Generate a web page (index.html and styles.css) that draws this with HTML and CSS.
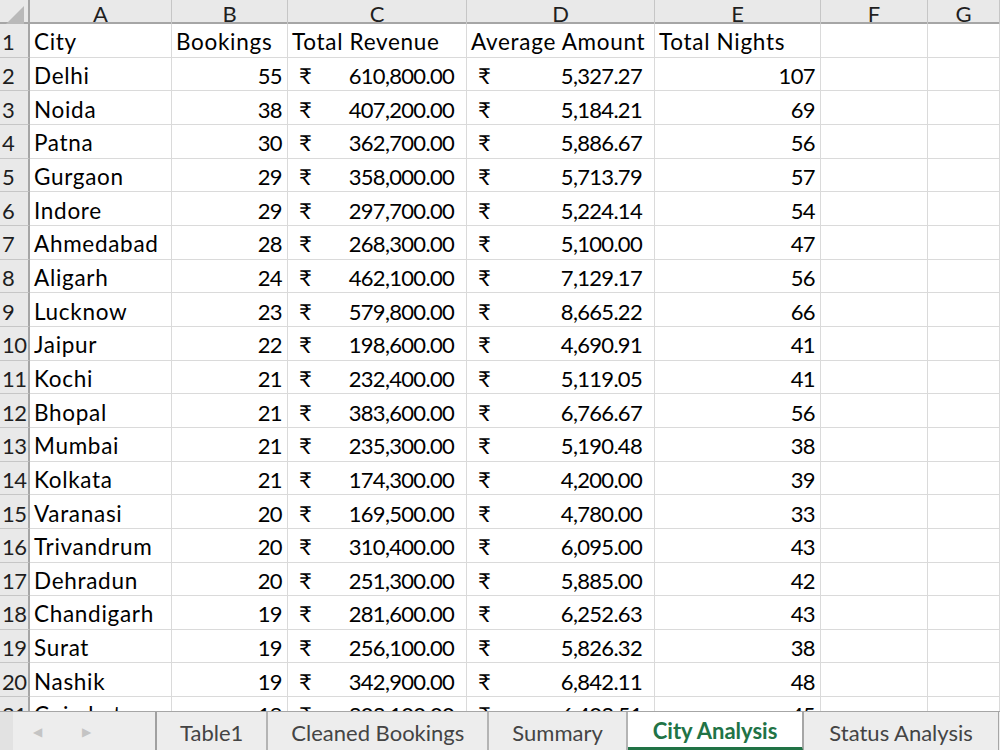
FILE: index.html
```html
<!DOCTYPE html>
<html lang="en">
<head>
  <meta charset="UTF-8" />
  <meta name="viewport" content="width=device-width, initial-scale=1.0"/>
  <title>City Analysis</title>
  <link rel="stylesheet" href="styles.css">
</head>
<body>

  <div class="sheet">
    <div class="grid" id="grid">
      <div class="row head-row">
        <div class="corner"><span class="corner-tri"></span></div>
        <div class="col-head">A</div>
        <div class="col-head">B</div>
        <div class="col-head">C</div>
        <div class="col-head">D</div>
        <div class="col-head">E</div>
        <div class="col-head">F</div>
        <div class="col-head">G</div>
      </div>
      <div class="row">
        <div class="row-head">1</div>
        <div class="cell">City</div>
        <div class="cell">Bookings</div>
        <div class="cell">Total Revenue</div>
        <div class="cell">Average Amount</div>
        <div class="cell">Total Nights</div>
        <div class="cell"></div>
        <div class="cell"></div>
      </div>
      <!-- Data rows inserted by JS -->
    </div>

    <div class="tabs">
      <div class="tab-nav">
        <span class="arrow">&#9664;</span>
        <span class="arrow">&#9654;</span>
      </div>
      <div class="tab">Table1</div>
      <div class="tab">Cleaned Bookings</div>
      <div class="tab">Summary</div>
      <div class="tab active">City Analysis</div>
      <div class="tab raised">Status Analysis</div>
    </div>
  </div>

  <script>
    const cities = [
      ["Delhi", 55, "610,800.00", "5,327.27", 107],
      ["Noida", 38, "407,200.00", "5,184.21", 69],
      ["Patna", 30, "362,700.00", "5,886.67", 56],
      ["Gurgaon", 29, "358,000.00", "5,713.79", 57],
      ["Indore", 29, "297,700.00", "5,224.14", 54],
      ["Ahmedabad", 28, "268,300.00", "5,100.00", 47],
      ["Aligarh", 24, "462,100.00", "7,129.17", 56],
      ["Lucknow", 23, "579,800.00", "8,665.22", 66],
      ["Jaipur", 22, "198,600.00", "4,690.91", 41],
      ["Kochi", 21, "232,400.00", "5,119.05", 41],
      ["Bhopal", 21, "383,600.00", "6,766.67", 56],
      ["Mumbai", 21, "235,300.00", "5,190.48", 38],
      ["Kolkata", 21, "174,300.00", "4,200.00", 39],
      ["Varanasi", 20, "169,500.00", "4,780.00", 33],
      ["Trivandrum", 20, "310,400.00", "6,095.00", 43],
      ["Dehradun", 20, "251,300.00", "5,885.00", 42],
      ["Chandigarh", 19, "281,600.00", "6,252.63", 43],
      ["Surat", 19, "256,100.00", "5,826.32", 38],
      ["Nashik", 19, "342,900.00", "6,842.11", 48],
      ["Coimbatore", 19, "303,100.00", "6,403.51", 45]
    ];

    function createRow(city, i) {
      return `
        <div class="row">
          <div class="row-head">${i + 2}</div>
          <div class="cell">${city[0]}</div>
          <div class="cell num">${city[1]}</div>
          <div class="cell money"><span>&#8377;</span><span>${city[2]}</span></div>
          <div class="cell money"><span>&#8377;</span><span>${city[3]}</span></div>
          <div class="cell num">${city[4]}</div>
          <div class="cell"></div>
          <div class="cell"></div>
        </div>
      `;
    }

    document.getElementById("grid").insertAdjacentHTML("beforeend", cities.map(createRow).join(""));
  </script>
</body>
</html>
```

FILE: styles.css
```css
* {
  margin: 0;
  padding: 0;
  box-sizing: border-box;
}

body {
  background-color: white;
  color: black;
  font-family: 'Lato', 'Noto Sans', sans-serif;
  overflow: hidden;
}

.sheet {
  width: 1000px;
  height: 750px;
  display: flex;
  flex-direction: column;
}

.grid {
  flex: 1;
  overflow: hidden;
}

.row {
  display: grid;
  grid-template-columns: 30px 142px 116px 179px 188px 166px 107px 1fr;
  height: 33.67px;
}

.head-row {
  height: 24px;
  background-color: #e9e9e9;
  border-bottom: 2px solid #a6a6a6;
}

.corner {
  position: relative;
  border-right: 2px solid #a6a6a6;
}

.corner-tri {
  position: absolute;
  right: 4px;
  bottom: 3px;
  width: 0;
  height: 0;
  border-left: 18px solid transparent;
  border-bottom: 18px solid #b9b9b9;
}

.col-head {
  display: flex;
  justify-content: center;
  align-items: center;
  font-size: 22px;
  color: #1f1f1f;
  border-right: 1px solid #c6c6c6;
}

.row-head {
  display: flex;
  align-items: center;
  padding: 3px 0 0 2px;
  font-size: 22px;
  letter-spacing: -0.5px;
  color: #1f1f1f;
  background-color: #e9e9e9;
  border-right: 2px solid #a6a6a6;
  border-bottom: 1px solid #c6c6c6;
}

.cell {
  display: flex;
  align-items: center;
  padding: 3px 5px 0 4px;
  font-size: 22.5px;
  letter-spacing: 0.7px;
  white-space: nowrap;
  border-right: 1px solid #dadada;
  border-bottom: 1px solid #dadada;
}

.cell.num {
  justify-content: flex-end;
  font-size: 22px;
  letter-spacing: -0.6px;
}

.cell.money {
  justify-content: space-between;
  padding: 3px 12px 0 11px;
  font-size: 22px;
  letter-spacing: -0.7px;
}

.tabs {
  height: 39px;
  display: flex;
  overflow: hidden;
  background-color: #ededed;
  border-top: 1px solid #a6a6a6;
  font-size: 22px;
  color: #444444;
}

.tab-nav {
  flex-shrink: 0;
  width: 157px;
  display: flex;
  align-items: center;
  gap: 40px;
  padding-left: 20px;
  border-left: 13px solid #e2e2e2;
  border-right: 2px solid #a0a0a0;
  font-size: 12px;
  color: #c4c4c4;
}

.tab {
  flex-shrink: 0;
  display: flex;
  align-items: center;
  white-space: nowrap;
  padding: 2px 23px 0;
  border-right: 2px solid #b4b4b4;
}

.tab.active {
  margin-top: -1px;
  padding: 2px 25px 0;
  background-color: white;
  color: #217346;
  font-weight: bold;
  border-bottom: 3px solid #217346;
  border-right: 1px solid #a6a6a6;
}

.tab.raised {
  padding: 2px 25px 0;
  border-left: 1px solid #a6a6a6;
  border-right: 1px solid #a6a6a6;
}
```
